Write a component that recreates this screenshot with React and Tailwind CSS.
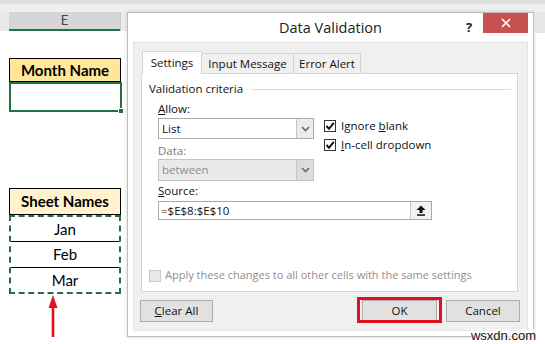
import React from "react";

const dlgFont = "font-['Segoe_UI','Open_Sans',sans-serif]";
const cellFont = "font-['Lato','Liberation_Sans',sans-serif]";

function Chevron({ color = "#555" }) {
  return (
    <svg width="9" height="6" viewBox="0 0 9 6">
      <path d="M1 1 L4.5 4.5 L8 1" fill="none" stroke={color} strokeWidth="1.6" />
    </svg>
  );
}

function Check() {
  return (
    <svg width="10" height="10" viewBox="0 0 10 10">
      <path d="M1.5 5 L4 7.8 L8.8 1.8" fill="none" stroke="#111" strokeWidth="2" />
    </svg>
  );
}

function CheckBox({ checked, disabled }) {
  return (
    <div
      className={
        "w-[12px] h-[12px] flex items-center justify-center border " +
        (disabled ? "border-[#c9c9c9] bg-[#e9e9e9]" : "border-[#333] bg-white")
      }
    >
      {checked ? <Check /> : null}
    </div>
  );
}

function Select({ value, disabled }) {
  return (
    <div
      className={
        "flex h-full border " +
        (disabled ? "border-[#c5c5c5] bg-[#eaeaea]" : "border-[#acacac] bg-white")
      }
    >
      <div
        className={
          "flex-1 flex items-center pl-[3px] text-[11.5px] " +
          (disabled ? "text-[#8d8d8d]" : "text-[#111]")
        }
      >
        {value}
      </div>
      <div
        className={
          "w-[17px] flex items-center justify-center border-l " +
          (disabled ? "border-[#c5c5c5] bg-[#dcdcdc]" : "border-[#c5c5c5] bg-[#ececec]")
        }
      >
        <Chevron color="#666" />
      </div>
    </div>
  );
}

function Button({ children, w, className = "" }) {
  return (
    <div
      className={
        "h-[22px] flex items-center justify-center bg-[#e1e1e1] border border-[#adadad] text-[11.5px] text-[#111] " +
        className
      }
      style={{ width: w }}
    >
      {children}
    </div>
  );
}

function LeftSheet() {
  return (
    <div className={"w-[127px] flex flex-col " + cellFont}>
      <div className="h-[19px] flex">
        <div className="w-[9px] bg-[#e9e9e9]" />
        <div className="w-[111px] bg-[#d6d6d6] border-b-2 border-[#217346] flex items-center justify-center text-[13px] text-[#444]">
          E
        </div>
        <div className="flex-1 bg-[#ececec] border-l border-[#c8c8c8]" />
      </div>
      <div className="pl-[9px] flex flex-col">
        <div className="mt-[27px] w-[112px] h-[24px] border border-black bg-[#ffe699] flex items-center justify-center font-bold text-[15px] text-black">
          Month Name
        </div>
        <div className="relative w-[113px] h-[30px] border-2 border-[#217346]">
          <div className="absolute right-[-4px] bottom-[-4px] w-[6px] h-[6px] bg-[#217346] border border-white" />
        </div>
        <div className="mt-[76px] w-[112px] h-[27px] border border-black bg-[#fff2cc] flex items-center justify-center font-bold text-[15px] text-black">
          Sheet Names
        </div>
        <div className="w-[112px] h-[79px] border-2 border-dashed border-[#2e6b44] flex flex-col text-[15px] text-black">
          <div className="h-[25px] flex items-center justify-center border-b border-black">Jan</div>
          <div className="h-[26px] flex items-center justify-center border-b border-black">Feb</div>
          <div className="flex-1 flex items-center justify-center">Mar</div>
        </div>
        <div className="ml-[39px] mt-[1px]">
          <svg width="10" height="42" viewBox="0 0 10 42">
            <polygon points="5,0 9.5,13 0.5,13" fill="#e4101e" />
            <rect x="3.7" y="12" width="2.6" height="30" fill="#e4101e" />
          </svg>
        </div>
      </div>
    </div>
  );
}

function Dialog() {
  return (
    <div
      className={
        "w-[407px] h-[325px] border border-[#bdbdbd] bg-white flex flex-col shadow-[0_0_4px_rgba(0,0,0,0.15)] " +
        dlgFont
      }
    >
      <div className="relative h-[29px] flex items-center justify-center">
        <span className="text-[14.5px] text-[#222]">Data Validation</span>
        <span className="absolute left-[338px] top-[5px] text-[13px] font-bold text-[#222]">?</span>
        <div className="absolute right-[5px] top-0 w-[45px] h-[20px] bg-[#c75050] flex items-center justify-center">
          <svg width="10" height="10" viewBox="0 0 10 10">
            <path d="M1 1 L9 9 M9 1 L1 9" stroke="white" strokeWidth="1.6" />
          </svg>
        </div>
      </div>
      <div className="mx-[5px] mb-[5px] flex-1 bg-[#f0f0f0] border border-[#e2e2e2] flex flex-col pl-[7px] pt-[7px]">
        <div className="flex items-end h-[23px] pl-[1px] text-[11.5px] text-[#111]">
          <div className="relative z-10 w-[60px] h-[23px] bg-white border border-b-0 border-[#d5d5d5] flex items-center justify-center mb-[-1px]">
            Settings
          </div>
          <div className="w-[92px] h-[20px] bg-[#f0f0f0] border border-b-0 border-l-0 border-[#d5d5d5] flex items-center justify-center">
            Input Message
          </div>
          <div className="w-[67px] h-[20px] bg-[#f0f0f0] border border-b-0 border-l-0 border-[#d5d5d5] flex items-center justify-center">
            Error Alert
          </div>
        </div>
        <div className="w-[377px] h-[219px] bg-white border border-[#d5d5d5] flex flex-col text-[11.5px] text-[#111]">
          <div className="mt-[8px] h-[14px] flex items-center pl-[7px] pr-[6px]">
            <span>Validation criteria</span>
            <div className="flex-1 h-px bg-[#dcdcdc] ml-[8px]" />
          </div>
          <div className="pl-[16px] flex flex-col">
            <div className="flex mt-[6px]">
              <div className="w-[156px] flex flex-col">
                <div className="h-[14px] flex items-center">
                  <span><span className="underline">A</span>llow:</span>
                </div>
                <div className="mt-[2px] h-[21px]">
                  <Select value="List" />
                </div>
                <div className="mt-[5px] h-[14px] flex items-center text-[#777]">Data:</div>
                <div className="mt-[1px] h-[22px]">
                  <Select value="between" disabled />
                </div>
              </div>
              <div className="ml-[10px] pt-[18px] flex flex-col gap-[7px]">
                <div className="flex items-center gap-[5px] h-[12px]">
                  <CheckBox checked />
                  <span>Ignore <span className="underline">b</span>lank</span>
                </div>
                <div className="flex items-center gap-[5px] h-[12px]">
                  <CheckBox checked />
                  <span><span className="underline">I</span>n-cell dropdown</span>
                </div>
              </div>
            </div>
            <div className="mt-[3px] h-[14px] flex items-center">
              <span><span className="underline">S</span>ource:</span>
            </div>
            <div className="mt-[3px] w-[274px] h-[19px] border border-[#a9a9a9] bg-white flex">
              <div className="flex-1 flex items-center pl-[2px]">=$E$8:$E$10</div>
              <div className="w-[21px] border-l border-[#c8c8c8] bg-[#f4f4f4] flex items-center justify-center">
                <svg width="10" height="11" viewBox="0 0 10 11">
                  <polygon points="5,0.5 9.5,5 6.5,5 6.5,8 3.5,8 3.5,5 0.5,5" fill="#111" />
                  <rect x="1" y="9.3" width="8" height="1.5" fill="#111" />
                </svg>
              </div>
            </div>
          </div>
          <div className="mt-[49px] pl-[7px] flex items-center gap-[4px] h-[13px] text-[11px] text-[#8f8f8f]">
            <CheckBox disabled />
            <span>Apply these changes to all other cells with the same settings</span>
          </div>
        </div>
        <div className="mt-[8px] ml-[-1px] w-[380px] flex">
          <Button w={73}>
            <span><span className="underline">C</span>lear All</span>
          </Button>
          <div className="flex-1" />
          <div className="relative">
            <Button w={75} className="border-[#0078d7]">OK</Button>
            <div className="absolute left-[-5px] top-[-3px] w-[85px] h-[26px] border-[3px] border-[#e3101c]" />
          </div>
          <Button w={74} className="ml-[9px]">Cancel</Button>
        </div>
      </div>
    </div>
  );
}

export default function App() {
  return (
    <div className="relative w-[545px] h-[344px] overflow-hidden bg-white flex flex-col">
      <div className="h-[12px] bg-[#efefef] border-t-[4px] border-[#e0e0e0]" />
      <div className="flex flex-1">
        <LeftSheet />
        <Dialog />
        <div className="flex-1 flex flex-col">
          <div className="h-[21px] bg-[#e6e6e6]" />
        </div>
      </div>
      <div className="absolute right-[9px] bottom-[2px] text-[13px] text-[#111] font-['Liberation_Sans',sans-serif] bg-white/60 leading-none">
        wsxdn.com
      </div>
    </div>
  );
}
